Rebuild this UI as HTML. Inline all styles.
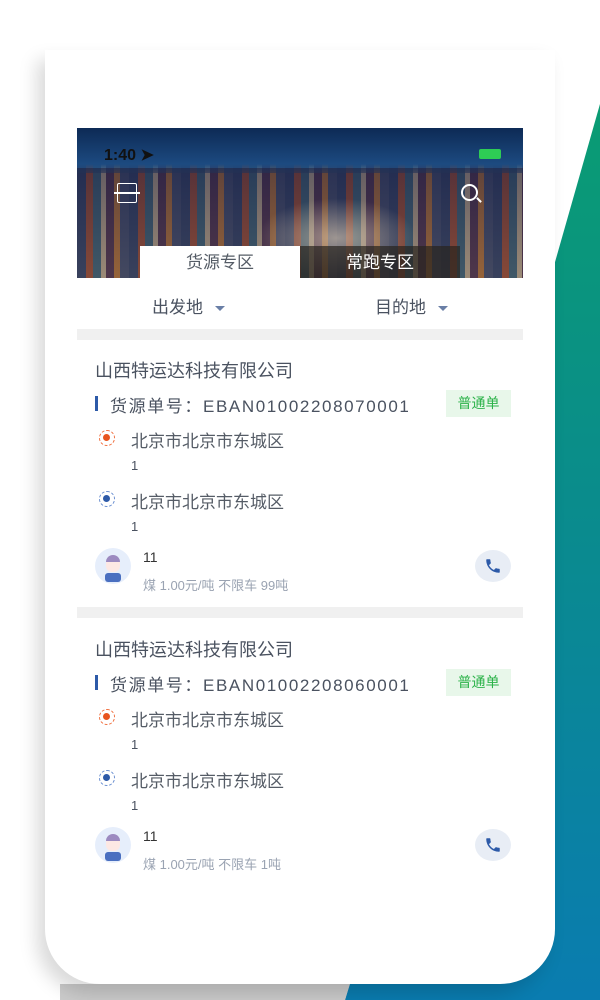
<!DOCTYPE html>
<html><head><meta charset="utf-8"><style>
*{margin:0;padding:0;box-sizing:border-box}
body{width:600px;height:1000px;position:relative;overflow:hidden;background:#fff;font-family:"Liberation Sans","Noto Sans CJK SC",sans-serif;color:#4a5260}
.bg{position:absolute;left:0;top:0;width:600px;height:1000px;background:linear-gradient(180deg,#0aa06c 0%,#0a8c8c 50%,#0a7cb0 100%);clip-path:polygon(600px 104px,600px 1000px,345px 1000px)}
.grey{position:absolute;left:60px;top:984px;width:290px;height:16px;background:#cbcbcb;clip-path:polygon(0 0,290px 0,285px 16px,0 16px)}
.phone{position:absolute;left:45px;top:50px;width:510px;height:934px;background:#fff;border-radius:0 0 55px 55px;box-shadow:-8px 10px 18px rgba(0,0,0,.15)}
.a{position:absolute;white-space:nowrap}
.img{position:absolute;left:77px;top:128px;width:446px;height:150px;overflow:hidden;
background:repeating-linear-gradient(90deg,#2a3f6a 0 9px,#9a4a35 9px 16px,#35607a 16px 24px,#b8a890 24px 29px,#4a3050 29px 37px,#b07038 37px 43px,#3a4a70 43px 52px);}
.sky{position:absolute;left:0;top:0;width:446px;height:45px;background:linear-gradient(180deg,#0d2a55,#1c4a80 80%,rgba(40,70,110,.6))}
.shade{position:absolute;left:0;top:40px;width:446px;height:110px;background:linear-gradient(180deg,rgba(30,30,60,.55),rgba(90,70,60,.3))}
.glow{position:absolute;left:180px;top:70px;width:160px;height:80px;background:radial-gradient(ellipse,rgba(240,220,190,.55),rgba(240,220,190,0) 70%)}
.tab1{position:absolute;left:140px;top:246px;width:160px;height:32px;background:#fff;color:#555c66;font-size:17px;text-align:center;line-height:34px}
.tab2{position:absolute;left:300px;top:246px;width:160px;height:32px;background:rgba(40,35,30,.7);color:#fff;font-size:17px;text-align:center;line-height:34px}
.sep{position:absolute;left:77px;width:446px;height:11px;background:#f0f0f0}
.tri{display:inline-block;width:0;height:0;border-left:5px solid transparent;border-right:5px solid transparent;border-top:5px solid #6a7fa6;margin-left:12px;vertical-align:middle}
.co{font-size:18px;color:#4a5260}
.on{font-size:17px;color:#4a5260;letter-spacing:1.6px}
.bar{position:absolute;width:3px;height:15px;background:#2d5aa8}
.tag{position:absolute;width:65px;height:27px;background:#e8f7ea;color:#2cb34a;font-size:14px;text-align:center;line-height:27px}
.dot{position:absolute;width:16px;height:16px;border-radius:50%;border:1.5px dashed}
.dot i{position:absolute;left:3px;top:3px;width:7px;height:7px;border-radius:50%}
.addr{font-size:17px;color:#555c66}
.one{font-size:13px;color:#4a5260}
.av{position:absolute;width:36px;height:36px;border-radius:50%;background:#e6eefb;overflow:hidden}
.ph{position:absolute;width:36px;height:32px;border-radius:50%;background:#e8edf5}
</style></head><body>
<div class="bg"></div>
<div class="grey"></div>
<div class="phone"></div>
<div class="img"><div class="sky"></div><div class="shade"></div><div class="glow"></div>
<div class="a" style="left:27px;top:17px;font-size:16px;font-weight:bold;color:#111">1:40 ➤</div>
<div class="a" style="left:402px;top:21px;width:22px;height:10px;background:#2ecc55;border-radius:2px"></div>
<div class="a" style="left:40px;top:55px;width:20px;height:20px;border:1.5px solid #fff;border-radius:2px"></div>
<div class="a" style="left:37px;top:64px;width:26px;height:1.5px;background:#fff"></div>
<div class="a" style="left:384px;top:56px;width:17px;height:17px;border:2px solid #fff;border-radius:50%"></div>
<div class="a" style="left:399px;top:71px;width:6px;height:2px;background:#fff;transform:rotate(45deg)"></div>
</div>
<div class="tab1">货源专区</div>
<div class="tab2">常跑专区</div>
<div class="a" style="left:152px;top:293px;font-size:17px;color:#4a5260">出发地<span class="tri"></span></div>
<div class="a" style="left:375px;top:293px;font-size:17px;color:#4a5260">目的地<span class="tri"></span></div>
<div class="sep" style="top:329px"></div>

<div class="a co" style="left:95px;top:357px">山西特运达科技有限公司</div>
<div class="bar" style="left:95px;top:396px"></div>
<div class="a on" style="left:110px;top:392px">货源单号：EBAN01002208070001</div>
<div class="tag" style="left:446px;top:390px">普通单</div>
<div class="dot" style="left:99px;top:430px;border-color:#f07040"><i style="background:#e8541e"></i></div>
<div class="a addr" style="left:131px;top:427px">北京市北京市东城区</div>
<div class="a one" style="left:131px;top:458px">1</div>
<div class="dot" style="left:99px;top:491px;border-color:#6a8fd0"><i style="background:#2d5aa8"></i></div>
<div class="a addr" style="left:131px;top:488px">北京市北京市东城区</div>
<div class="a one" style="left:131px;top:519px">1</div>
<div class="av" style="left:95px;top:548px"><div class="a" style="left:11px;top:7px;width:14px;height:8px;border-radius:7px 7px 0 0;background:#9c8ac0"></div><div class="a" style="left:11px;top:14px;width:14px;height:10px;background:#fde8e4;border-radius:0 0 6px 6px"></div><div class="a" style="left:10px;top:25px;width:16px;height:9px;background:#4a6fc0;border-radius:3px"></div></div>
<div class="a" style="left:143px;top:549px;font-size:14px;color:#333">11</div>
<div class="a" style="left:143px;top:575px;font-size:13px;color:#9aa3b2">煤 1.00元/吨 不限车 99吨</div>
<div class="ph" style="left:475px;top:550px"><svg style="position:absolute;left:9px;top:7px" width="18" height="18" viewBox="0 0 24 24"><path fill="#2d5aa8" d="M6.6 10.8c1.4 2.8 3.8 5.1 6.6 6.6l2.2-2.2c.3-.3.7-.4 1-.2 1.1.4 2.3.6 3.6.6.6 0 1 .4 1 1V20c0 .6-.4 1-1 1C10.6 21 3 13.4 3 4c0-.6.4-1 1-1h3.5c.6 0 1 .4 1 1 0 1.3.2 2.5.6 3.6.1.3 0 .7-.2 1z"/></svg></div>
<div class="sep" style="top:607px"></div>

<div class="a co" style="left:95px;top:636px">山西特运达科技有限公司</div>
<div class="bar" style="left:95px;top:675px"></div>
<div class="a on" style="left:110px;top:671px">货源单号：EBAN01002208060001</div>
<div class="tag" style="left:446px;top:669px">普通单</div>
<div class="dot" style="left:99px;top:709px;border-color:#f07040"><i style="background:#e8541e"></i></div>
<div class="a addr" style="left:131px;top:706px">北京市北京市东城区</div>
<div class="a one" style="left:131px;top:737px">1</div>
<div class="dot" style="left:99px;top:770px;border-color:#6a8fd0"><i style="background:#2d5aa8"></i></div>
<div class="a addr" style="left:131px;top:767px">北京市北京市东城区</div>
<div class="a one" style="left:131px;top:798px">1</div>
<div class="av" style="left:95px;top:827px"><div class="a" style="left:11px;top:7px;width:14px;height:8px;border-radius:7px 7px 0 0;background:#9c8ac0"></div><div class="a" style="left:11px;top:14px;width:14px;height:10px;background:#fde8e4;border-radius:0 0 6px 6px"></div><div class="a" style="left:10px;top:25px;width:16px;height:9px;background:#4a6fc0;border-radius:3px"></div></div>
<div class="a" style="left:143px;top:828px;font-size:14px;color:#333">11</div>
<div class="a" style="left:143px;top:854px;font-size:13px;color:#9aa3b2">煤 1.00元/吨 不限车 1吨</div>
<div class="ph" style="left:475px;top:829px"><svg style="position:absolute;left:9px;top:7px" width="18" height="18" viewBox="0 0 24 24"><path fill="#2d5aa8" d="M6.6 10.8c1.4 2.8 3.8 5.1 6.6 6.6l2.2-2.2c.3-.3.7-.4 1-.2 1.1.4 2.3.6 3.6.6.6 0 1 .4 1 1V20c0 .6-.4 1-1 1C10.6 21 3 13.4 3 4c0-.6.4-1 1-1h3.5c.6 0 1 .4 1 1 0 1.3.2 2.5.6 3.6.1.3 0 .7-.2 1z"/></svg></div>
</body></html>
